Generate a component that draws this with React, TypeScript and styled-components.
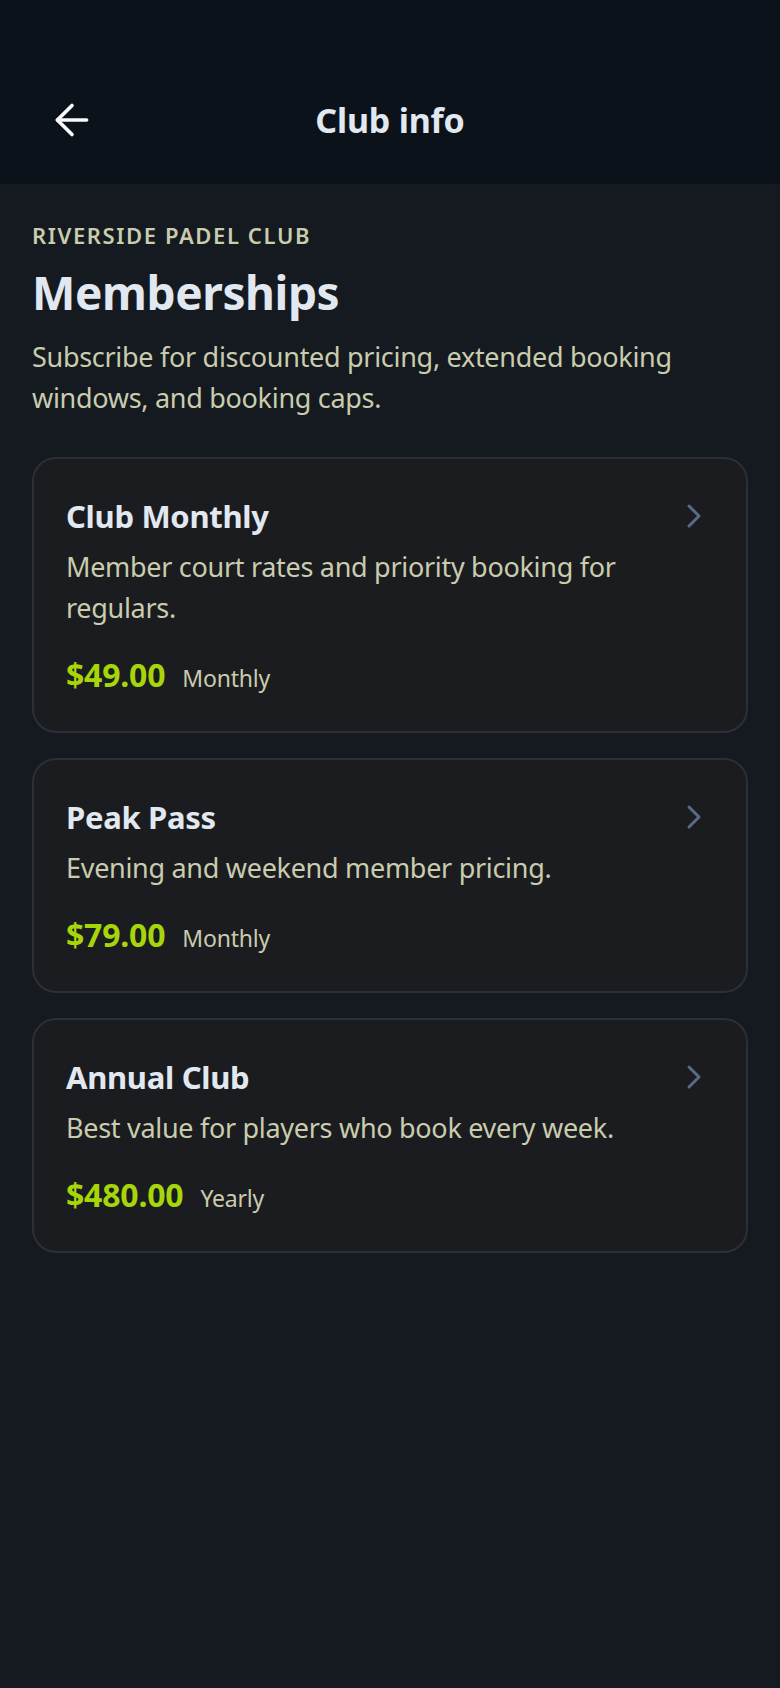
import * as React from 'react'
import styled, { createGlobalStyle } from 'styled-components'
import { ArrowLeft, ChevronRight } from 'lucide-react'

const GlobalStyle = createGlobalStyle`
  html, body {
    margin: 0;
    padding: 0;
    background: #151a21;
  }
  body {
    font-family: 'Noto Sans', 'Open Sans', sans-serif;
    -webkit-font-smoothing: antialiased;
  }
`

const Page = styled.div`
  min-height: 1688px;
  background: #151a21;
  display: flex;
  flex-direction: column;
`

const Header = styled.header`
  background: #0c121a;
  padding: 88px 40px 32px;
  display: grid;
  grid-template-columns: 64px 1fr 64px;
  align-items: center;
  height: 64px;
`

const BackButton = styled.button`
  width: 64px;
  height: 64px;
  border: none;
  background: transparent;
  padding: 0;
  color: #f8fafc;
  display: flex;
  align-items: center;
  justify-content: center;
  cursor: pointer;
`

const HeaderTitle = styled.h1`
  margin: 0;
  text-align: center;
  font-size: 34px;
  font-weight: 700;
  color: #e2e8f0;
  letter-spacing: -0.2px;
`

const Content = styled.main`
  padding: 36px 32px;
  display: flex;
  flex-direction: column;
`

const Eyebrow = styled.div`
  font-size: 22px;
  font-weight: 600;
  letter-spacing: 1.6px;
  color: #c9ccad;
  line-height: 30px;
`

const Heading = styled.h2`
  margin: 12px 0 0;
  font-size: 46px;
  font-weight: 700;
  color: #e2e8f0;
  line-height: 60px;
  letter-spacing: -0.4px;
`

const Lead = styled.p`
  margin: 14px 0 0;
  font-size: 27px;
  line-height: 41px;
  color: #c9ccad;
  letter-spacing: -0.3px;
`

const CardList = styled.div`
  margin-top: 39px;
  display: flex;
  flex-direction: column;
  gap: 25px;
`

const Card = styled.div`
  background: #1b1c20;
  border: 2px solid #2c2f35;
  border-radius: 24px;
  padding: 35px 32px 31px;
  display: flex;
  flex-direction: column;
`

const CardHead = styled.div`
  display: flex;
  align-items: center;
  justify-content: space-between;
  gap: 16px;
`

const CardTitle = styled.h3`
  margin: 0;
  font-size: 31px;
  font-weight: 700;
  line-height: 44px;
  color: #e2e8f0;
  letter-spacing: -0.3px;
`

const Chevron = styled(ChevronRight)`
  color: #5b6b85;
  flex-shrink: 0;
`

const CardText = styled.p`
  margin: 8px 0 0;
  font-size: 27px;
  line-height: 41px;
  color: #c9ccad;
  letter-spacing: -0.3px;
`

const PriceRow = styled.div`
  margin-top: 25px;
  display: flex;
  align-items: baseline;
  gap: 17px;
  line-height: 44px;
`

const Price = styled.span`
  font-size: 32px;
  font-weight: 700;
  color: #a6d60a;
  letter-spacing: -0.2px;
`

const Period = styled.span`
  font-size: 23px;
  color: #c9ccad;
  letter-spacing: -0.2px;
`

const plans = [
  { name: 'Club Monthly', text: 'Member court rates and priority booking for regulars.', price: '$49.00', period: 'Monthly' },
  { name: 'Peak Pass', text: 'Evening and weekend member pricing.', price: '$79.00', period: 'Monthly' },
  { name: 'Annual Club', text: 'Best value for players who book every week.', price: '$480.00', period: 'Yearly' },
]

export default function App() {
  return <Page>
    <GlobalStyle />
    <Header>
      <BackButton aria-label='Back'>
        <ArrowLeft size={50} strokeWidth={1.75} />
      </BackButton>
      <HeaderTitle>Club info</HeaderTitle>
      <span />
    </Header>
    <Content>
      <Eyebrow>RIVERSIDE PADEL CLUB</Eyebrow>
      <Heading>Memberships</Heading>
      <Lead>Subscribe for discounted pricing, extended booking windows, and booking caps.</Lead>
      <CardList>
        {plans.map(p => <Card key={p.name}>
          <CardHead>
            <CardTitle>{p.name}</CardTitle>
            <Chevron size={40} strokeWidth={1.75} />
          </CardHead>
          <CardText>{p.text}</CardText>
          <PriceRow>
            <Price>{p.price}</Price>
            <Period>{p.period}</Period>
          </PriceRow>
        </Card>)}
      </CardList>
    </Content>
  </Page>
}
